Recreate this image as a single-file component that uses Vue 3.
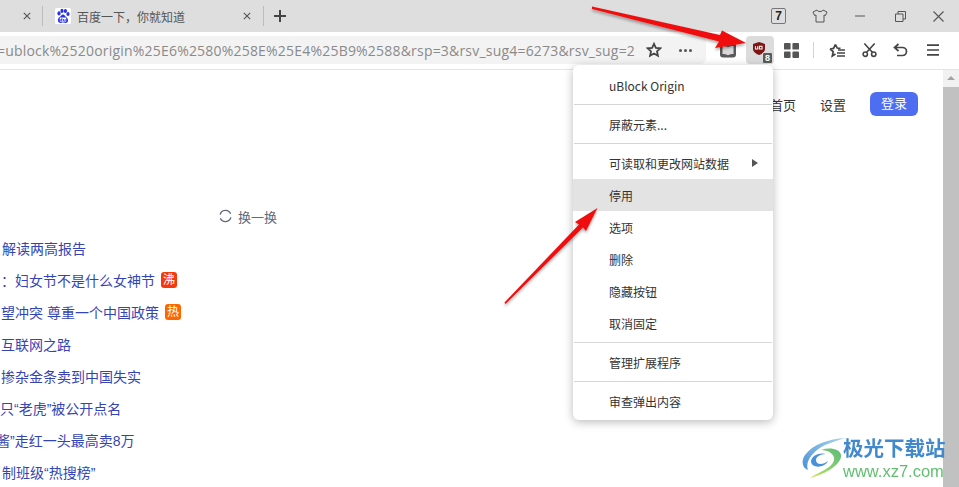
<script setup>
const rows = [
  { text: '解读两高报告', x: 2 },
  { text: '：妇女节不是什么女神节', x: 1, badge: '沸', cls: 'boil' },
  { text: '望冲突 尊重一个中国政策', x: 1, badge: '热', cls: 'hot' },
  { text: '互联网之路', x: 1 },
  { text: '掺杂金条卖到中国失实', x: 1 },
  { text: '只“老虎”被公开点名', x: 0 },
  { text: '酱”走红一头最高卖8万', x: -4 },
  { text: '制班级“热搜榜”', x: 2 }
]
const menu = [
  { type: 'item', label: 'uBlock Origin', h: 37 },
  { type: 'sep' },
  { type: 'item', label: '屏蔽元素...', h: 38 },
  { type: 'sep' },
  { type: 'item', label: '可读取和更改网站数据', h: 35, arrow: true, pt: 3 },
  { type: 'item', label: '停用', h: 32, active: true },
  { type: 'item', label: '选项', h: 32 },
  { type: 'item', label: '删除', h: 32 },
  { type: 'item', label: '隐藏按钮', h: 32 },
  { type: 'item', label: '取消固定', h: 35, pb: 3 },
  { type: 'sep' },
  { type: 'item', label: '管理扩展程序', h: 38 },
  { type: 'sep' },
  { type: 'item', label: '审查弹出内容', h: 38 }
]
</script>

<template>
  <div class="win">
    <header class="tabbar">
      <div class="tab first">
        <svg class="x" viewBox="0 0 10 10"><path d="M1 1l8 8M9 1l-8 8" /></svg>
      </div>
      <i class="tabsep"></i>
      <div class="tab second">
        <svg class="fav" viewBox="0 0 16 16">
          <rect width="16" height="16" rx="1.5" fill="#fff" />
          <g fill="#2932e1">
            <ellipse cx="4" cy="5.4" rx="1.6" ry="2.1" />
            <ellipse cx="7" cy="2.9" rx="1.6" ry="2.1" />
            <ellipse cx="10.4" cy="3" rx="1.6" ry="2.1" />
            <ellipse cx="13" cy="6" rx="1.6" ry="2" />
            <path d="M8 6.5c-1.6 0-2 1.6-3.2 2.6C3.4 10.200 2.600 11.200 3 13c.4 1.700 2 2.100 3 1.900.9-.2 1.300-.3 2-.3s1.200.1 2 .3c1.100.2 2.700-.2 3-1.900.3-1.800-.6-2.800-1.900-3.900C9.900 8.100 9.600 6.500 8 6.500z" />
          </g>
          <rect x="4.800" y="9.500" width="6.400" height="4.200" rx=".6" fill="#fff" />
          <path d="M6.900 10v3H5.700v-1.500h1.200M8.500 11v2h1.700v-2" fill="none" stroke="#2932e1" stroke-width=".8" />
        </svg>
        <span class="tabtitle">百度一下，你就知道</span>
        <svg class="x" viewBox="0 0 10 10"><path d="M1 1l8 8M9 1l-8 8" /></svg>
      </div>
      <i class="tabsep"></i>
      <svg class="plus" viewBox="0 0 12 12"><path d="M6 0v12M0 6h12" /></svg>
      <div class="winctl">
        <span class="seven">7</span>
        <svg class="shirt" viewBox="0 0 16 14"><path d="M5 1 1 3l1.500 3.500L4 6v7h8V6l1.500.5L15 3l-4-2c-.5 2-5.500 2-6 0z" /></svg>
        <svg class="min" viewBox="0 0 10 2"><path d="M0 1h10" /></svg>
        <svg class="restore" viewBox="0 0 11 11"><path d="M.5 3h7.500v7.500H.5zM3 3V.5h7.500V8H8" /></svg>
        <svg class="close" viewBox="0 0 11 11"><path d="M.5.500l10 10M10.500.500l-10 10" /></svg>
      </div>
    </header>

    <div class="toolbar">
      <div class="omni">
        <span class="url">=ublock%2520origin%25E6%2580%258E%25E4%25B9%2588&amp;rsp=3&amp;rsv_sug4=6273&amp;rsv_sug=2</span>
        <svg class="star" viewBox="0 0 16 16"><path d="M8 1.800l1.900 4 4.400.5-3.300 3 .9 4.400L8 11.500l-3.900 2.200.9-4.400-3.300-3 4.400-.5z" /></svg>
        <span class="dots"><i></i><i></i><i></i></span>
      </div>
      <div class="tools">
        <svg class="book" viewBox="0 0 16 16">
          <rect y=".5" width="16" height="15" rx="3" fill="#595959" />
          <path d="M2.500 4c2 0 4 .3 5.500 1.300C9.500 4.300 11.500 4 13.500 4v8c-2 0-4 .3-5.500 1.200C6.500 12.300 4.500 12 2.500 12z" fill="#d9d9d9" />
        </svg>
        <div class="ublock">
          <svg class="shield" viewBox="0 0 13 14">
            <path d="M6.500 0 13 2v5.500c0 3-3 5.300-6.500 6.500C3 12.800 0 10.500 0 7.500V2z" fill="#7f1414" />
            <path d="M2.600 4.500v3h2.500v-3M6.900 4.500h2.900v3H6.900z" fill="none" stroke="#fff" stroke-width="1.100" />
          </svg>
          <span class="count">8</span>
        </div>
        <svg class="grid" viewBox="0 0 16 16" fill="#555">
          <rect width="7" height="7" rx="1" /><rect x="9" width="7" height="7" rx="1" />
          <rect y="9" width="7" height="7" rx="1" /><rect x="9" y="9" width="7" height="7" rx="1" />
        </svg>
        <i class="toolsep"></i>
        <svg class="favlist" viewBox="0 0 17 15"><path d="M6.500 1.500 8.200 5l3.300.3M1 6l3.200 2.600L3.300 13l3.200-2M1 6l3.500-.6L6.500 1.500" /><path d="M9 7h7M8 10h8M8 13h8" /></svg>
        <svg class="scissors" viewBox="0 0 16 16"><circle cx="3.500" cy="12.500" r="2.300" /><circle cx="12.500" cy="12.500" r="2.300" /><path d="M2.500 1l9 10M13.500 1l-9 10" /></svg>
        <svg class="undo" viewBox="0 0 15 14"><path d="M5.500 1 1.500 4.500l4 3.500M2 4.500h7.500a4 4 0 0 1 0 8H4" /></svg>
        <svg class="burger" viewBox="0 0 12 12"><path d="M0 1.200h12M0 6h12M0 10.800h12" /></svg>
      </div>
    </div>

    <div class="page">
      <main class="content">
        <nav class="topnav">
          <a class="navlink home">首页</a>
          <a class="navlink set">设置</a>
          <span class="login">登录</span>
        </nav>
        <div class="refresh">
          <svg viewBox="0 0 14 14"><path d="M1.200 5.500A6 6 0 0 1 12.500 4.600M12.800 8.500A6 6 0 0 1 1.500 9.400" /></svg>
          <span>换一换</span>
        </div>
        <ul class="list">
          <li v-for="r in rows" :key="r.text" class="row">
            <span class="rowtext" :style="{ marginLeft: r.x + 'px' }">{{ r.text }}</span>
            <span v-if="r.badge" class="badge" :class="r.cls">{{ r.badge }}</span>
          </li>
        </ul>
      </main>
      <aside class="scroll">
        <i class="uparrow"></i>
        <div class="thumb"></div>
      </aside>

      <div class="mark">
        <svg class="swirl" viewBox="0 0 46 44">
          <defs>
            <linearGradient id="gb" x1="1" y1="0" x2="0" y2="1">
              <stop offset="0" stop-color="#a9d6ea" />
              <stop offset="1" stop-color="#4a90d8" />
            </linearGradient>
            <linearGradient id="gg" x1="1" y1="0" x2="0" y2="1">
              <stop offset="0" stop-color="#58bb78" />
              <stop offset=".7" stop-color="#9fd868" />
              <stop offset="1" stop-color="#f0e268" />
            </linearGradient>
          </defs>
          <path d="M45 2C29 3 13 8 5 19c-4 6-3 13 3 15C5 27 11 16 25 9c7-3 14-5 20-7z" fill="url(#gb)" />
          <path d="M11 25c1-6 9-9 15-7-6 0-10 3-10 6 0 5 7 5 12 1-3 7-17 8-17 0z" fill="#4a90d8" />
          <path d="M21 14c9-3 19-1 20 5 1 9-15 19-31 23 6-5 22-9 24-18 1-6-6-10-13-10z" fill="url(#gg)" />
        </svg>
        <div class="marktext">
          <strong>极光下载站</strong>
          <span>www.xz7.com</span>
        </div>
      </div>

      <div class="menu">
        <template v-for="(m, i) in menu" :key="i">
          <hr v-if="m.type === 'sep'" />
          <div
            v-else
            class="mi"
            :class="{ active: m.active }"
            :style="{ height: m.h + 'px', paddingTop: (m.pt || 0) + 'px', paddingBottom: (m.pb || 0) + 'px' }"
          >
            <span>{{ m.label }}</span>
            <i v-if="m.arrow" class="caret"></i>
          </div>
        </template>
      </div>
    </div>

    <svg class="arrows" viewBox="0 0 959 487">
      <defs>
        <filter id="sh" x="-10%" y="-10%" width="120%" height="130%">
          <feDropShadow dx="0" dy="2" stdDeviation="1.500" flood-color="#000" flood-opacity=".35" />
        </filter>
      </defs>
      <g fill="#f01010" filter="url(#sh)">
        <path d="M592 6.500 720 35l2-4.500 24 12.500-31 5 4-6.500L592 9z" />
        <path d="M504.500 302.500 579 224.500l-4-2.500 22.500-14-11.500 23-3-3.500-77.500 76.500z" />
      </g>
    </svg>
  </div>
</template>

<style>
html, body { margin: 0; overflow: hidden; }
</style>

<style scoped>
.win {
  position: relative;
  width: 959px;
  height: 487px;
  overflow: hidden;
  background: #fff;
  display: flex;
  flex-direction: column;
  font-family: "Liberation Sans", "Noto Sans CJK SC", sans-serif;
}
.tabbar {
  height: 32px;
  flex: none;
  background: #dedede;
  display: flex;
  align-items: center;
}
.tab { display: flex; align-items: center; height: 32px; }
.tab.first { width: 42px; justify-content: flex-end; padding-right: 11px; box-sizing: border-box; }
.tab.second { width: 220px; padding-left: 12px; box-sizing: border-box; }
.x { width: 8px; height: 8px; fill: none; stroke: #555; stroke-width: 1.4; }
.fav { width: 16px; height: 16px; margin-right: 6px; }
.tabtitle { font-size: 12px; color: #555; width: 166px; font-family: "Noto Sans CJK SC", sans-serif; }
.tabsep { width: 1px; height: 20px; background: #bdbdbd; flex: none; }
.plus { width: 12px; height: 12px; margin-left: 10px; fill: none; stroke: #444; stroke-width: 2; }
.winctl { margin-left: auto; display: flex; align-items: center; height: 32px; }
.seven {
  width: 13px; height: 14px; border: 1px solid #777; border-radius: 2px;
  font-size: 12px; line-height: 14px; text-align: center; color: #222;
  margin-right: 26px; font-weight: 700;
}
.shirt { width: 16px; height: 14px; margin-right: 27px; fill: none; stroke: #555; stroke-width: 1; }
.min { width: 10px; height: 2px; margin-right: 30px; fill: none; stroke: #555; }
.restore { width: 11px; height: 11px; margin-right: 27px; fill: none; stroke: #555; }
.close { width: 11px; height: 11px; margin-right: 15px; fill: none; stroke: #555; stroke-width: 1.100; }

.toolbar {
  height: 38px;
  flex: none;
  box-sizing: border-box;
  background: #fff;
  border-bottom: 1px solid #e4e4e4;
  display: flex;
  padding-top: 4px;
}
.omni {
  width: 706px;
  height: 28px;
  flex: none;
  background: #f3f3f3;
  border-radius: 0 6px 6px 0;
  display: flex;
  align-items: center;
  position: relative;
}
.url {
  font-family: "Open Sans", "Noto Sans", sans-serif;
  font-size: 14px;
  letter-spacing: .2px;
  color: #8a8a8a;
  white-space: nowrap;
  width: 646px;
  overflow: hidden;
  flex: none;
  text-indent: -3px;
}
.star { width: 16px; height: 16px; fill: none; stroke: #444; stroke-width: 1.800; flex: none; }
.dots { display: flex; gap: 2px; margin-left: 17px; }
.dots i { width: 3px; height: 3px; border-radius: 50%; background: #555; }
.tools { display: flex; align-items: center; height: 28px; padding-left: 14px; }
.book { width: 16px; height: 16px; }
.ublock {
  position: relative;
  width: 28px;
  height: 28px;
  margin-left: 10px;
  background: #dcdcdc;
  border-radius: 4px;
}
.shield { position: absolute; left: 7px; top: 6px; width: 12px; height: 13px; }
.count {
  position: absolute; left: 16px; top: 16px;
  width: 9px; height: 10px; background: #5b5b5b; border: 1px solid #dcdcdc; border-radius: 2px;
  color: #fff; font-size: 9px; line-height: 10px; text-align: center; font-weight: 700;
}
.grid { width: 15px; height: 15px; margin-left: 10px; }
.toolsep { width: 1px; height: 16px; background: #d5d5d5; margin-left: 14px; }
.favlist { width: 17px; height: 15px; margin-left: 15px; fill: none; stroke: #444; stroke-width: 1.700; }
.scissors { width: 15px; height: 16px; margin-left: 16px; fill: none; stroke: #444; stroke-width: 1.700; }
.undo { width: 15px; height: 14px; margin-left: 16px; fill: none; stroke: #444; stroke-width: 1.700; }
.burger { width: 12px; height: 12px; margin-left: 19px; fill: none; stroke: #444; stroke-width: 1.700; }

.page { position: relative; flex: 1; display: flex; min-height: 0; }
.content { flex: 1; min-width: 0; overflow: hidden; }
.topnav {
  display: flex;
  align-items: center;
  justify-content: flex-end;
  padding: 22px 25px 0 0;
  height: 24px;
  color: #333;
  font-size: 13px;
}
.navlink { margin-right: 24px; }
.login {
  width: 48px; height: 24px; border-radius: 6px;
  background: #4e6ef2; color: #fff; line-height: 24px; text-align: center;
}
.refresh {
  display: flex; align-items: center; height: 20px;
  margin-top: 90px; padding-left: 219px;
  color: #626675; font-size: 13px; gap: 6px;
}
.refresh svg { width: 13px; height: 14px; fill: none; stroke: #626675; stroke-width: 1.400; }
.list { list-style: none; margin: 6px 0 0; padding: 0; }
.row {
  height: 32px; display: flex; align-items: center;
  font-size: 14px; color: #3544b4; white-space: nowrap;
}
.badge {
  width: 16px; height: 16px; margin-left: 6px; border-radius: 3px;
  color: #fff; font-size: 12px; line-height: 16px; text-align: center;
}
.boil { background: #f43a0a; }
.hot { background: #ff6600; }
.scroll { width: 16px; flex: none; background: #f1f1f1; position: relative; padding-top: 17px; box-sizing: border-box; }
.uparrow {
  position: absolute; left: 4px; top: 6px;
  border-left: 4px solid transparent; border-right: 4px solid transparent;
  border-bottom: 4px solid #a3a3a3;
}
.thumb { height: 100%; background: #c1c1c1; }

.mark {
  position: absolute; left: 800px; top: 365px;
  display: flex; align-items: center; gap: 0;
  filter: blur(.5px);
}
.swirl { width: 46px; height: 44px; }
.marktext { display: flex; flex-direction: column; margin-left: -3px; padding-top: 2px; }
.marktext strong { font-size: 20.500px; line-height: 24px; color: #4189cc; font-weight: 700; white-space: nowrap; }
.marktext span { font-size: 16.500px; line-height: 20px; color: #62bf70; white-space: nowrap; }

.menu {
  position: absolute; left: 573px; top: -5px;
  width: 200px;
  box-sizing: border-box;
  padding: 2px 0 0;
  background: #fff;
  border-radius: 6px;
  box-shadow: 0 2px 10px rgba(0, 0, 0, .28);
  font-family: "Noto Sans CJK SC", sans-serif;
  font-size: 12px;
  color: #333;
}
.menu hr { margin: 0 1px; border: 0; height: 1px; background: #d6d6d6; }
.mi { display: flex; align-items: center; padding-left: 36px; position: relative; box-sizing: border-box; }
.mi.active { background: #e3e3e3; }
.caret {
  position: absolute; right: 15px; top: 50%; margin-top: -3px;
  border-top: 4px solid transparent; border-bottom: 4px solid transparent;
  border-left: 6px solid #555;
}
.arrows { position: absolute; left: 0; top: 0; width: 959px; height: 487px; pointer-events: none; }
</style>
